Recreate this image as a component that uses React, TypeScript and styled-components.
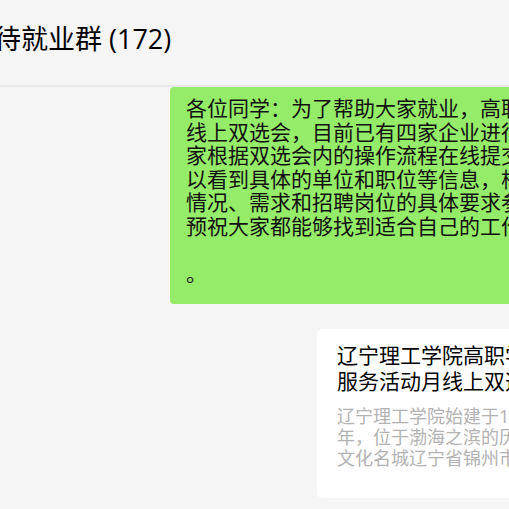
import React from 'react';
import styled, { createGlobalStyle } from 'styled-components';

const GlobalStyle = createGlobalStyle`
  html, body {
    margin: 0;
    padding: 0;
    background-color: #f5f5f5;
  }
  body {
    font-family: 'Open Sans', 'Noto Sans CJK SC', sans-serif;
  }
`;

const Screen = styled.div`
  width: 509px;
  height: 509px;
  overflow: hidden;
  background-color: #f5f5f5;
`;

const Header = styled.div`
  box-sizing: border-box;
  width: 100%;
  height: 87px;
  padding-top: 25px;
  border-bottom: 2px solid #e8e8e8;
  white-space: nowrap;
`;

const Title = styled.h1`
  margin: 0 0 0 -6px;
  font-size: 27px;
  line-height: 27px;
  font-weight: 400;
  color: #000;
`;

const Messages = styled.div`
  width: 660px;
  padding-right: 38px;
  box-sizing: border-box;
  display: flex;
  flex-direction: column;
  align-items: flex-end;
  gap: 25px;
`;

const Bubble = styled.div`
  box-sizing: border-box;
  width: 452px;
  padding: 10px 16px 19px;
  background-color: #95ec69;
  border-radius: 4px;
  font-size: 21px;
  line-height: 23.5px;
  color: #111;
  overflow: hidden;
`;

const Line = styled.div`
  white-space: nowrap;
  min-height: 23.5px;
`;

const Card = styled.div`
  box-sizing: border-box;
  width: 305px;
  padding: 13px 20px 29px;
  background-color: #fff;
  border-radius: 5px;
  overflow: hidden;
`;

const CardTitle = styled.div`
  font-size: 21px;
  line-height: 26px;
  color: #000;
  white-space: nowrap;
`;

const CardDesc = styled.div`
  margin-top: 12px;
  font-size: 18px;
  line-height: 21px;
  color: #b2b2b2;
  white-space: nowrap;
`;

const notice = [
  '各位同学：为了帮助大家就业，高职学院举办',
  '线上双选会，目前已有四家企业进行注册，请大',
  '家根据双选会内的操作流程在线提交简历，就可',
  '以看到具体的单位和职位等信息，根据自己的',
  '情况、需求和招聘岗位的具体要求参加应聘，',
  '预祝大家都能够找到适合自己的工作岗位',
  '',
  '。',
];

export default function App() {
  return (
    <Screen>
      <GlobalStyle />
      <Header>
        <Title>待就业群 (172)</Title>
      </Header>
      <Messages>
        <Bubble>
          {notice.map((text, i) => (
            <Line key={i}>{text}</Line>
          ))}
        </Bubble>
        <Card>
          <CardTitle>辽宁理工学院高职学院毕</CardTitle>
          <CardTitle>服务活动月线上双选会</CardTitle>
          <CardDesc>
            <div>辽宁理工学院始建于1999</div>
            <div>年，位于渤海之滨的历史</div>
            <div>文化名城辽宁省锦州市。</div>
          </CardDesc>
        </Card>
      </Messages>
    </Screen>
  );
}
